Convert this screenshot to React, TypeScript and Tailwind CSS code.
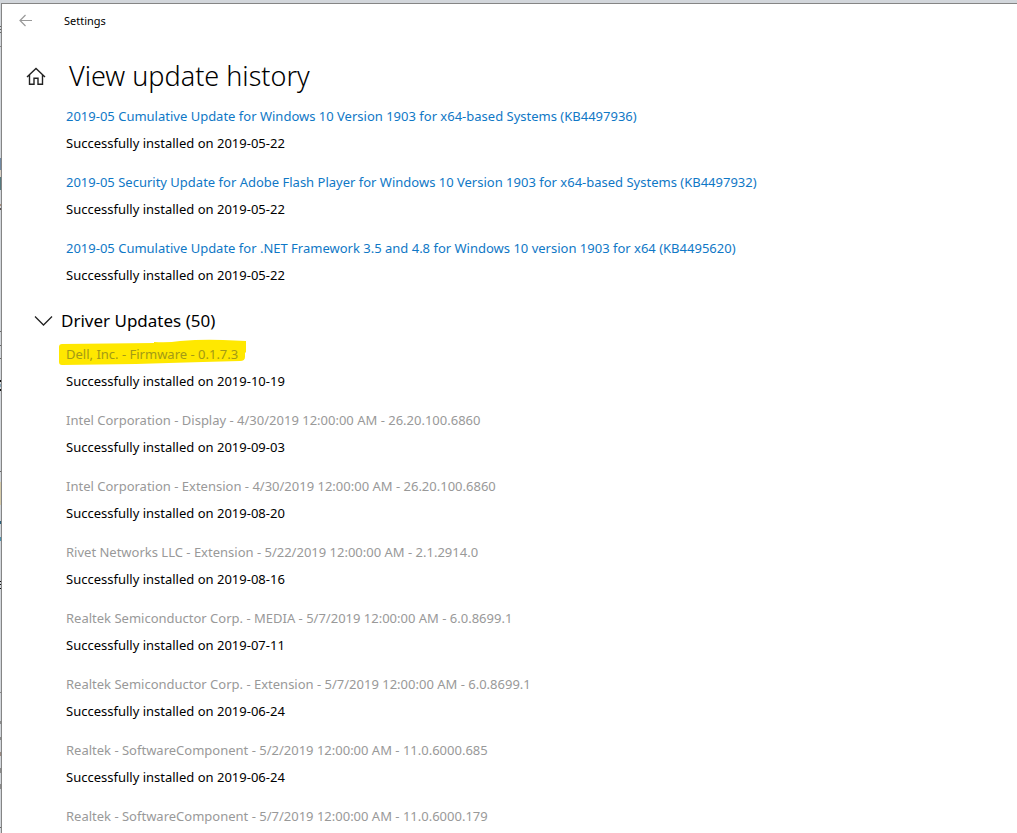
import React from "react";

type Update = { title: string; installed?: string };

const qualityUpdates: Update[] = [
  { title: "2019-05 Cumulative Update for Windows 10 Version 1903 for x64-based Systems (KB4497936)", installed: "2019-05-22" },
  { title: "2019-05 Security Update for Adobe Flash Player for Windows 10 Version 1903 for x64-based Systems (KB4497932)", installed: "2019-05-22" },
  { title: "2019-05 Cumulative Update for .NET Framework 3.5 and 4.8 for Windows 10 version 1903 for x64 (KB4495620)", installed: "2019-05-22" },
];

const driverUpdates: Update[] = [
  { title: "Dell, Inc. - Firmware - 0.1.7.3", installed: "2019-10-19" },
  { title: "Intel Corporation - Display - 4/30/2019 12:00:00 AM - 26.20.100.6860", installed: "2019-09-03" },
  { title: "Intel Corporation - Extension - 4/30/2019 12:00:00 AM - 26.20.100.6860", installed: "2019-08-20" },
  { title: "Rivet Networks LLC - Extension - 5/22/2019 12:00:00 AM - 2.1.2914.0", installed: "2019-08-16" },
  { title: "Realtek Semiconductor Corp. - MEDIA - 5/7/2019 12:00:00 AM - 6.0.8699.1", installed: "2019-07-11" },
  { title: "Realtek Semiconductor Corp. - Extension - 5/7/2019 12:00:00 AM - 6.0.8699.1", installed: "2019-06-24" },
  { title: "Realtek - SoftwareComponent - 5/2/2019 12:00:00 AM - 11.0.6000.685", installed: "2019-06-24" },
  { title: "Realtek - SoftwareComponent - 5/7/2019 12:00:00 AM - 11.0.6000.179" },
];

// Slivers of the window behind: [top, height, colour]
const slivers: [number, number, string][] = [
  [26, 1, "#666"], [29, 1, "#666"], [32, 1, "#666"], [46, 1, "#888"],
  [158, 12, "#7189a3"], [170, 7, "#d8cfc4"], [177, 13, "#55797f"],
  [204, 2, "#a58d7c"], [208, 2, "#5c5653"],
  [331, 1, "#666"], [345, 1, "#666"], [358, 1, "#666"],
  [380, 2, "#111"], [384, 3, "#87a4b5"], [389, 2, "#111"],
  [471, 1, "#666"], [482, 23, "#d6cba9"], [521, 3, "#285f7a"], [537, 4, "#4d91ad"],
  [581, 1, "#111"], [584, 1, "#111"], [588, 1, "#111"], [692, 1, "#888"],
  [721, 3, "#8b8b8b"], [737, 3, "#8b8b8b"], [752, 4, "#9a8a82"],
  [768, 5, "#8b8b8b"], [784, 5, "#8b8b8b"], [827, 1, "#666"],
];

function Highlight() {
  return (
    <svg className="absolute -left-2 -top-1 h-8 w-48" viewBox="0 0 192 32" aria-hidden="true">
      <path
        d="M1 10 Q1 7 4 7 L96 6 V5 Q110 6 122 4 Q145 2 165 3 L188 4 V15 L187 16 V20 Q187 24 182 24 L145 25 Q110 26 78 27 L4 28 Q1 28 1 25 Z"
        fill="#ffe800"
      />
    </svg>
  );
}

function UpdateList({ items, linked }: { items: Update[]; linked?: boolean }) {
  return (
    <ul className="flex flex-col gap-3 pl-16 pr-4 text-[13px] leading-[27px]">
      {items.map((item, i) => (
        <li key={item.title}>
          {linked ? (
            <a href="#" className="block text-[#0f78c6]">{item.title}</a>
          ) : i === 0 ? (
            <p className="relative text-[#a39a15]">
              <Highlight />
              <span className="relative">{item.title}</span>
            </p>
          ) : (
            <p className="text-[#999]">{item.title}</p>
          )}
          {item.installed && <p>Successfully installed on {item.installed}</p>}
        </li>
      ))}
    </ul>
  );
}

export default function App() {
  return (
    <div className="flex min-h-screen flex-col bg-[#d2d6db] pt-[3px] font-['Noto_Sans','Open_Sans',sans-serif] text-black">
      <div className="relative flex grow">
        <svg className="absolute left-0 -top-[3px] h-full w-px" aria-hidden="true">
          {slivers.map(([y, h, fill]) => (
            <rect key={y} x="0" y={y} width="1" height={h} fill={fill} />
          ))}
        </svg>
        <div className="ml-px min-w-0 grow border-l border-t border-[#858585] bg-white">
          <header className="flex h-[33px] items-center">
            <button aria-label="Back" className="ml-[17px] flex text-[#999]">
              <svg width="14" height="14" viewBox="0 0 14 14" fill="none" stroke="currentColor" strokeWidth="1.200" aria-hidden="true">
                <path d="M13 6.500H1M6.500 1 1 6.500l5.500 5.500" />
              </svg>
            </button>
            <span className="ml-[31px] text-[11px] leading-4">Settings</span>
          </header>
          <main>
            <div className="flex h-[66px] items-center pb-1 pt-4">
              <button aria-label="Home" className="ml-6 flex">
                <svg width="20" height="20" viewBox="0 0 20 20" fill="none" stroke="#222" strokeWidth="1.400" aria-hidden="true">
                  <path d="M1 11 10 2.500l9 8.500M3.500 9v9.300H8v-6h4v6h4.500V9" />
                </svg>
              </button>
              <h1 className="ml-[23px] text-[27px] font-light leading-9">View update history</h1>
            </div>
            <UpdateList items={qualityUpdates} linked />
            <h2 className="mb-1 mt-4 flex h-8 text-[17px]">
              <button aria-expanded="true" className="ml-8 flex items-center gap-2">
                <svg width="19" height="12" viewBox="0 0 19 12" fill="none" stroke="#222" strokeWidth="1.300" aria-hidden="true">
                  <path d="m1 1.500 8.500 8.500L18 1.500" />
                </svg>
                <span>Driver Updates (50)</span>
              </button>
            </h2>
            <UpdateList items={driverUpdates} />
          </main>
        </div>
      </div>
    </div>
  );
}
